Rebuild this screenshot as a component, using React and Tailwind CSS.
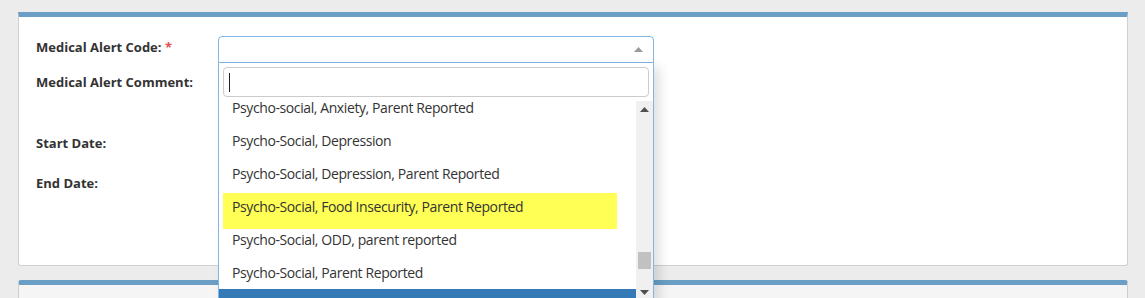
import React from 'react';

const options = [
  'Psycho-social, Anxiety, Parent Reported',
  'Psycho-Social, Depression',
  'Psycho-Social, Depression, Parent Reported',
  'Psycho-Social, Food Insecurity, Parent Reported',
  'Psycho-Social, ODD, parent reported',
  'Psycho-Social, Parent Reported',
];

const font = { fontFamily: '"Open Sans", "Liberation Sans", sans-serif' };

const App = () => {
  return (
    <div className="h-[298px] w-[1145px] overflow-hidden bg-[#ececec] pt-[12px] pl-[18px]" style={font}>
      {/* Card 1 */}
      <div className="w-[1110px] h-[254px] bg-white border border-[#cfcfcf] border-t-[5px] border-t-[#6a9ec5] rounded-b-[3px] pt-[19px] pl-[17px]">
        <div className="flex flex-col text-[13px] font-bold text-[#333]">
          <div className="flex h-[27px] items-center">
            <div className="w-[182px] pb-[4px]">
              Medical Alert Code: <span className="text-[#e05050]">*</span>
            </div>
            {/* select + dropdown */}
            <div className="relative w-[436px] h-[27px]">
              <div className="h-[27px] border border-[#7fb6e6] rounded-t-[4px] bg-white flex items-center justify-end pr-[10px]">
                <svg width="9" height="5" viewBox="0 0 9 5"><path d="M0 5 L4.5 0 L9 5 Z" fill="#9a9a9a" /></svg>
              </div>
              <div className="absolute left-0 top-[27px] w-[436px] h-[240px] bg-white border-x border-[#7fb6e6] shadow-[6px_4px_10px_rgba(0,0,0,0.12)] z-10 font-normal">
                <div className="px-[4px] pt-[4px]">
                  <div className="h-[30px] w-[426px] border border-[#cccccc] rounded-[4px] flex items-center pl-[5px]">
                    <div className="w-px h-[19px] bg-[#222]" />
                  </div>
                </div>
                <div className="relative mt-[4px] h-[200px] overflow-hidden flex">
                  <div className="flex-1 -mt-[10px] text-[14px] tracking-[-0.4px] text-[#333]">
                    {options.map((o, i) => (
                      <div key={o} className="relative h-[33px] flex items-center pl-[13px]">
                        {i === 3 && (
                          <div className="absolute left-[4px] top-[3px] w-[394px] h-[36px] bg-[#ffff55]" />
                        )}
                        <span className="relative whitespace-nowrap">{o}</span>
                      </div>
                    ))}
                    <div className="h-[33px] bg-[#337ab7]" />
                  </div>
                  <div className="w-[17px] bg-[#f0f0f0] relative flex flex-col items-center">
                    <svg className="mt-[6px]" width="9" height="5" viewBox="0 0 9 5"><path d="M0 5 L4.5 0 L9 5 Z" fill="#505050" /></svg>
                    <div className="absolute top-[151px] left-[2px] w-[13px] h-[17px] bg-[#c1c1c1]" />
                    <svg className="absolute top-[189px]" width="9" height="5" viewBox="0 0 9 5"><path d="M0 0 L4.5 5 L9 0 Z" fill="#505050" /></svg>
                  </div>
                </div>
              </div>
            </div>
          </div>
          <div className="flex h-[60px] mt-[7px]">
            <div className="w-[182px] leading-[24px]">Medical Alert Comment:</div>
          </div>
          <div className="flex h-[27px] items-center">
            <div className="w-[182px]">Start Date:</div>
          </div>
          <div className="flex h-[27px] items-center mt-[13px]">
            <div className="w-[182px]">End Date:</div>
          </div>
        </div>
      </div>
      {/* Card 2 */}
      <div className="mt-[14px] w-[1110px] h-[40px] bg-[#f5f5f5] border border-[#cfcfcf] border-t-[5px] border-t-[#6a9ec5] rounded-t-[3px]" />
    </div>
  );
};

export default App;
